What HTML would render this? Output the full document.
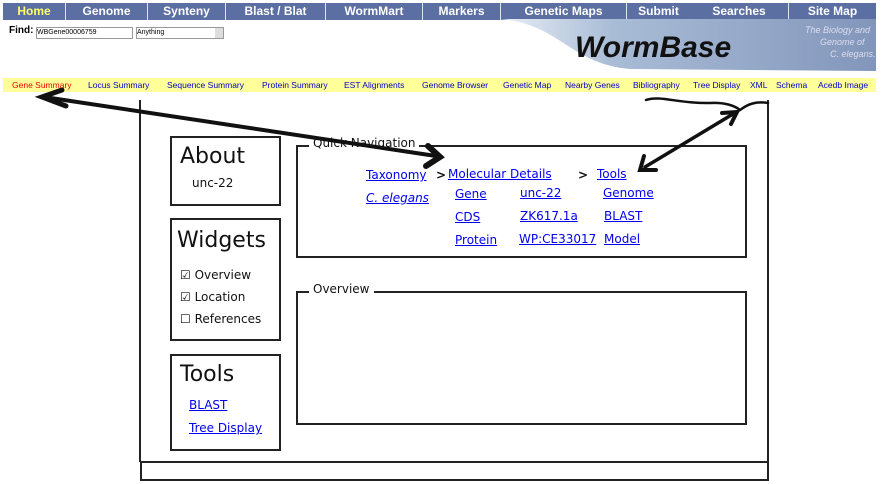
<!DOCTYPE html>
<html><head><style>
body{margin:0;width:881px;height:484px;background:#fff;position:relative;overflow:hidden;font-family:"Liberation Sans",sans-serif}
.a{position:absolute}
.nav{left:3px;top:3px;width:873px;height:17px;background:#5b6fa2;display:flex}
.nav div{color:#fff;font-weight:bold;font-size:12px;text-align:center;line-height:17px;border-right:1px solid #dfe4ef;box-sizing:border-box}
.yb{left:3px;top:78px;width:873px;height:14px;background:#ffff99;font-size:8.5px;line-height:14px;color:#00c}
.yb span{position:absolute;top:0;white-space:nowrap}
.box{border:2px solid #222;box-sizing:border-box}
.s{font-family:"DejaVu Sans",sans-serif;color:#111}
.l{position:absolute;color:#00e;text-decoration:underline;font-family:"DejaVu Sans",sans-serif;font-size:12px;white-space:nowrap}
</style></head><body>
<div class="a nav">
<div style="width:63px;color:#ffff66">Home</div><div style="width:82px">Genome</div><div style="width:78px">Synteny</div><div style="width:100px">Blast / Blat</div><div style="width:97px">WormMart</div><div style="width:78px">Markers</div><div style="width:126px">Genetic Maps</div><div style="width:63px;border:0">Submit</div><div style="width:99px">Searches</div><div style="width:87px;border:0">Site Map</div>
</div>
<svg class="a" style="left:500px;top:19px" width="376" height="52">
<defs><linearGradient id="g" x1="0" x2="1"><stop offset="0" stop-color="#e8eef6"/><stop offset=".3" stop-color="#a9bcd6"/><stop offset="1" stop-color="#8296bb"/></linearGradient></defs>
<path d="M0 0 C60 5 70 45 130 50 L376 52 L376 0 Z" fill="url(#g)"/>
<text x="75" y="38" font-family="Liberation Sans" font-style="italic" font-weight="bold" font-size="30" fill="#111">WormBase</text>
<text x="305" y="14" font-family="Liberation Sans" font-style="italic" font-size="9" fill="#dde">The Biology and</text>
<text x="320" y="26" font-family="Liberation Sans" font-style="italic" font-size="9" fill="#dde">Genome of</text>
<text x="330" y="38" font-family="Liberation Sans" font-style="italic" font-size="9" fill="#dde">C. elegans.</text>
</svg>
<div class="a" style="left:9px;top:25px;font-size:10px;font-weight:bold">Find:</div>
<div class="a" style="left:36px;top:27px;width:95px;height:10px;border:1px solid #999;font-size:7px;line-height:10px">WBGene00006759</div>
<div class="a" style="left:136px;top:27px;width:86px;height:10px;border:1px solid #999;font-size:7px;line-height:10px">Anything<span style="position:absolute;right:0;top:0;width:8px;height:10px;background:#ddd"></span></div>
<div class="a yb">
<span style="left:9px;color:#e00">Gene Summary</span><span style="left:85px">Locus Summary</span><span style="left:164px">Sequence Summary</span><span style="left:259px">Protein Summary</span><span style="left:341px">EST Alignments</span><span style="left:419px">Genome Browser</span><span style="left:500px">Genetic Map</span><span style="left:562px">Nearby Genes</span><span style="left:630px">Bibliography</span><span style="left:690px">Tree Display</span><span style="left:747px">XML</span><span style="left:773px">Schema</span><span style="left:815px">Acedb Image</span>
</div>
<div class="a" style="left:139px;top:100px;width:2px;height:362px;background:#222"></div>
<div class="a" style="left:767px;top:100px;width:2px;height:362px;background:#222"></div>
<div class="a box" style="left:140px;top:461px;width:629px;height:20px"></div>
<div class="a box" style="left:170px;top:136px;width:111px;height:70px"><div class="s" style="position:absolute;left:8px;top:6px;font-size:22px">About</div><div class="s" style="position:absolute;left:20px;top:38px;font-size:12px">unc-22</div></div>
<div class="a box" style="left:170px;top:218px;width:111px;height:123px"><div class="s" style="position:absolute;left:5px;top:8px;font-size:22px">Widgets</div>
<div class="s" style="position:absolute;left:8px;top:44px;font-size:12px;line-height:22px">☑ Overview<br>☑ Location<br>☐ References</div></div>
<div class="a box" style="left:170px;top:354px;width:111px;height:97px"><div class="s" style="position:absolute;left:8px;top:6px;font-size:22px">Tools</div>
<span class="l" style="left:17px;top:42px">BLAST</span><span class="l" style="left:17px;top:65px">Tree Display</span></div>
<div class="a box" style="left:296px;top:145px;width:451px;height:113px"></div>
<div class="a s" style="left:309px;top:136px;font-size:12px;background:#fff;padding:0 4px">Quick Navigation</div>
<div class="a box" style="left:296px;top:291px;width:451px;height:134px"></div>
<div class="a s" style="left:309px;top:282px;font-size:12px;background:#fff;padding:0 4px">Overview</div>
<span class="l" style="left:366px;top:168px">Taxonomy</span><span class="a s" style="left:436px;top:168px;font-size:12px;font-weight:bold">&gt;</span><span class="l" style="left:448px;top:167px">Molecular Details</span><span class="a s" style="left:578px;top:168px;font-size:12px;font-weight:bold">&gt;</span><span class="l" style="left:597px;top:167px">Tools</span>
<span class="l" style="left:366px;top:191px;font-style:italic">C. elegans</span>
<span class="l" style="left:455px;top:187px">Gene</span><span class="l" style="left:520px;top:186px">unc-22</span><span class="l" style="left:603px;top:186px">Genome</span>
<span class="l" style="left:455px;top:210px">CDS</span><span class="l" style="left:520px;top:209px">ZK617.1a</span><span class="l" style="left:604px;top:209px">BLAST</span>
<span class="l" style="left:455px;top:233px">Protein</span><span class="l" style="left:519px;top:232px">WP:CE33017</span><span class="l" style="left:604px;top:232px">Model</span>
<svg class="a" style="left:0;top:0" width="881" height="484" fill="none" stroke="#111" stroke-linecap="round">
<path d="M44 97 L436 156" stroke-width="4"/>
<path d="M62 90 L42 97 L66 106" stroke-width="5"/>
<path d="M428 146 L440 157 L426 166" stroke-width="6"/>
<path d="M645 167 L733 114" stroke-width="3.5"/>
<path d="M644 156 L640 170 L656 170" stroke-width="4"/>
<path d="M722 113 L737 112 L731 124" stroke-width="4"/>
<path d="M646 100 C660 95 680 104 710 103 C725 102 735 106 740 110 C748 104 756 101 768 103" stroke-width="2.5"/>
</svg>
</body></html>
